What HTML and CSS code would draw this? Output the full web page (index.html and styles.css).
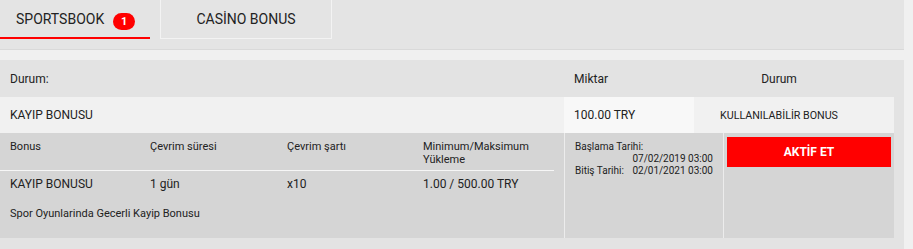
FILE: index.html
```html
<!DOCTYPE html>
<html lang="tr">
<head>
<meta charset="utf-8">
<title>Bonus</title>
<link rel="stylesheet" href="styles.css">
</head>
<body>
<div class="page">
  <div class="tabs">
    <div class="tab tab-active">SPORTSBOOK <span class="badge">1</span></div>
    <div class="tab tab-casino">CASİNO BONUS</div>
  </div>
  <div class="panel">
    <div class="row head">
      <div class="c-name">Durum:</div>
      <div class="c-amount">Miktar</div>
      <div class="c-status">Durum</div>
    </div>
    <div class="row item">
      <div class="c-name">KAYIP BONUSU</div>
      <div class="c-amount amount">100.00 TRY</div>
      <div class="c-status status">KULLANILABİLİR BONUS</div>
    </div>
    <div class="detail">
      <div class="d-info">
        <table class="info-table">
          <colgroup>
            <col class="col-1">
            <col class="col-2">
            <col class="col-3">
            <col class="col-4">
          </colgroup>
          <thead>
            <tr>
              <th>Bonus</th>
              <th>Çevrim süresi</th>
              <th>Çevrim şartı</th>
              <th>Minimum/Maksimum Yükleme</th>
            </tr>
          </thead>
          <tbody>
            <tr>
              <td>KAYIP BONUSU</td>
              <td>1 gün</td>
              <td>x10</td>
              <td>1.00 / 500.00 TRY</td>
            </tr>
          </tbody>
        </table>
        <div class="desc">Spor Oyunlarinda Gecerli Kayip Bonusu</div>
      </div>
      <div class="d-dates">
        <div>Başlama Tarihi:</div>
        <div class="date-right">07/02/2019 03:00</div>
        <div class="date-line"><span>Bitiş Tarihi:</span><span>02/01/2021 03:00</span></div>
      </div>
      <div class="d-action">
        <div class="btn">AKTİF ET</div>
      </div>
    </div>
  </div>
</div>
</body>
</html>
```
FILE: styles.css
```css
body {
  margin: 0;
  background: #f0f0f0;
  font-family: Roboto, "Liberation Sans", Arial, sans-serif;
  color: #222;
}

.page {
  width: 904px;
}

.tabs {
  display: flex;
  align-items: flex-start;
  height: 49px;
  background: #e4e4e4;
  border-bottom: 1px solid #d9d9d9;
}

.tab {
  display: flex;
  align-items: center;
  font-size: 14px;
  color: #222;
}

.tab-active {
  width: 134px;
  height: 37px;
  padding-left: 16px;
  border-bottom: 2px solid #ff0000;
}

.badge {
  margin-left: 9px;
  margin-top: 6px;
  width: 22px;
  height: 17px;
  border-radius: 9px;
  background: #ff0000;
  color: #fff;
  font-size: 11px;
  font-weight: bold;
  display: flex;
  align-items: center;
  justify-content: center;
}

.tab-casino {
  margin-left: 10px;
  width: 170px;
  height: 38px;
  border: 1px solid #f3f3f3;
  border-top: 0;
  justify-content: center;
}

.panel {
  margin-top: 10px;
  background: #e3e3e3;
  padding: 0 10px 11px 0;
}

.row {
  display: flex;
  align-items: center;
  font-size: 12px;
}

.head {
  height: 37px;
}

.item {
  height: 36px;
  background: #f1f1f1;
}

.c-name {
  width: 554px;
  padding-left: 10px;
}

.c-amount {
  width: 120px;
  padding-left: 10px;
  align-self: stretch;
  display: flex;
  align-items: center;
}

.amount {
  background: #f8f8f8;
}

.c-status {
  width: 170px;
  text-align: center;
}

.status {
  font-size: 10.7px;
}

.detail {
  display: flex;
  height: 105px;
  background: #d5d5d5;
}

.d-info {
  width: 554px;
  padding-right: 10px;
  border-right: 1px solid #ececec;
}

.info-table {
  width: 554px;
  border-collapse: collapse;
  table-layout: fixed;
}

.col-1 { width: 140px; }
.col-2 { width: 137px; }
.col-3 { width: 136px; }
.col-4 { width: 141px; }

.info-table th {
  font-size: 11px;
  font-weight: normal;
  line-height: 13px;
  text-align: left;
  vertical-align: top;
  padding: 7px 10px 4px;
  border-bottom: 1px solid #f6f6f6;
  color: #222;
}

.info-table td {
  font-size: 12px;
  line-height: 14px;
  padding: 6px 10px 0;
}

.desc {
  font-size: 11px;
  line-height: 13px;
  padding: 16px 10px 0;
}

.d-dates {
  width: 138px;
  padding: 8px 10px 0;
  border-right: 1px solid #ececec;
  font-size: 10px;
  line-height: 12px;
  color: #222;
}

.date-right {
  text-align: right;
}

.date-line {
  display: flex;
  justify-content: space-between;
}

.d-action {
  flex: 1;
  padding: 4px 3px;
}

.btn {
  height: 30px;
  background: #ff0000;
  color: #fff;
  font-size: 12px;
  font-weight: bold;
  display: flex;
  align-items: center;
  justify-content: center;
}
```
